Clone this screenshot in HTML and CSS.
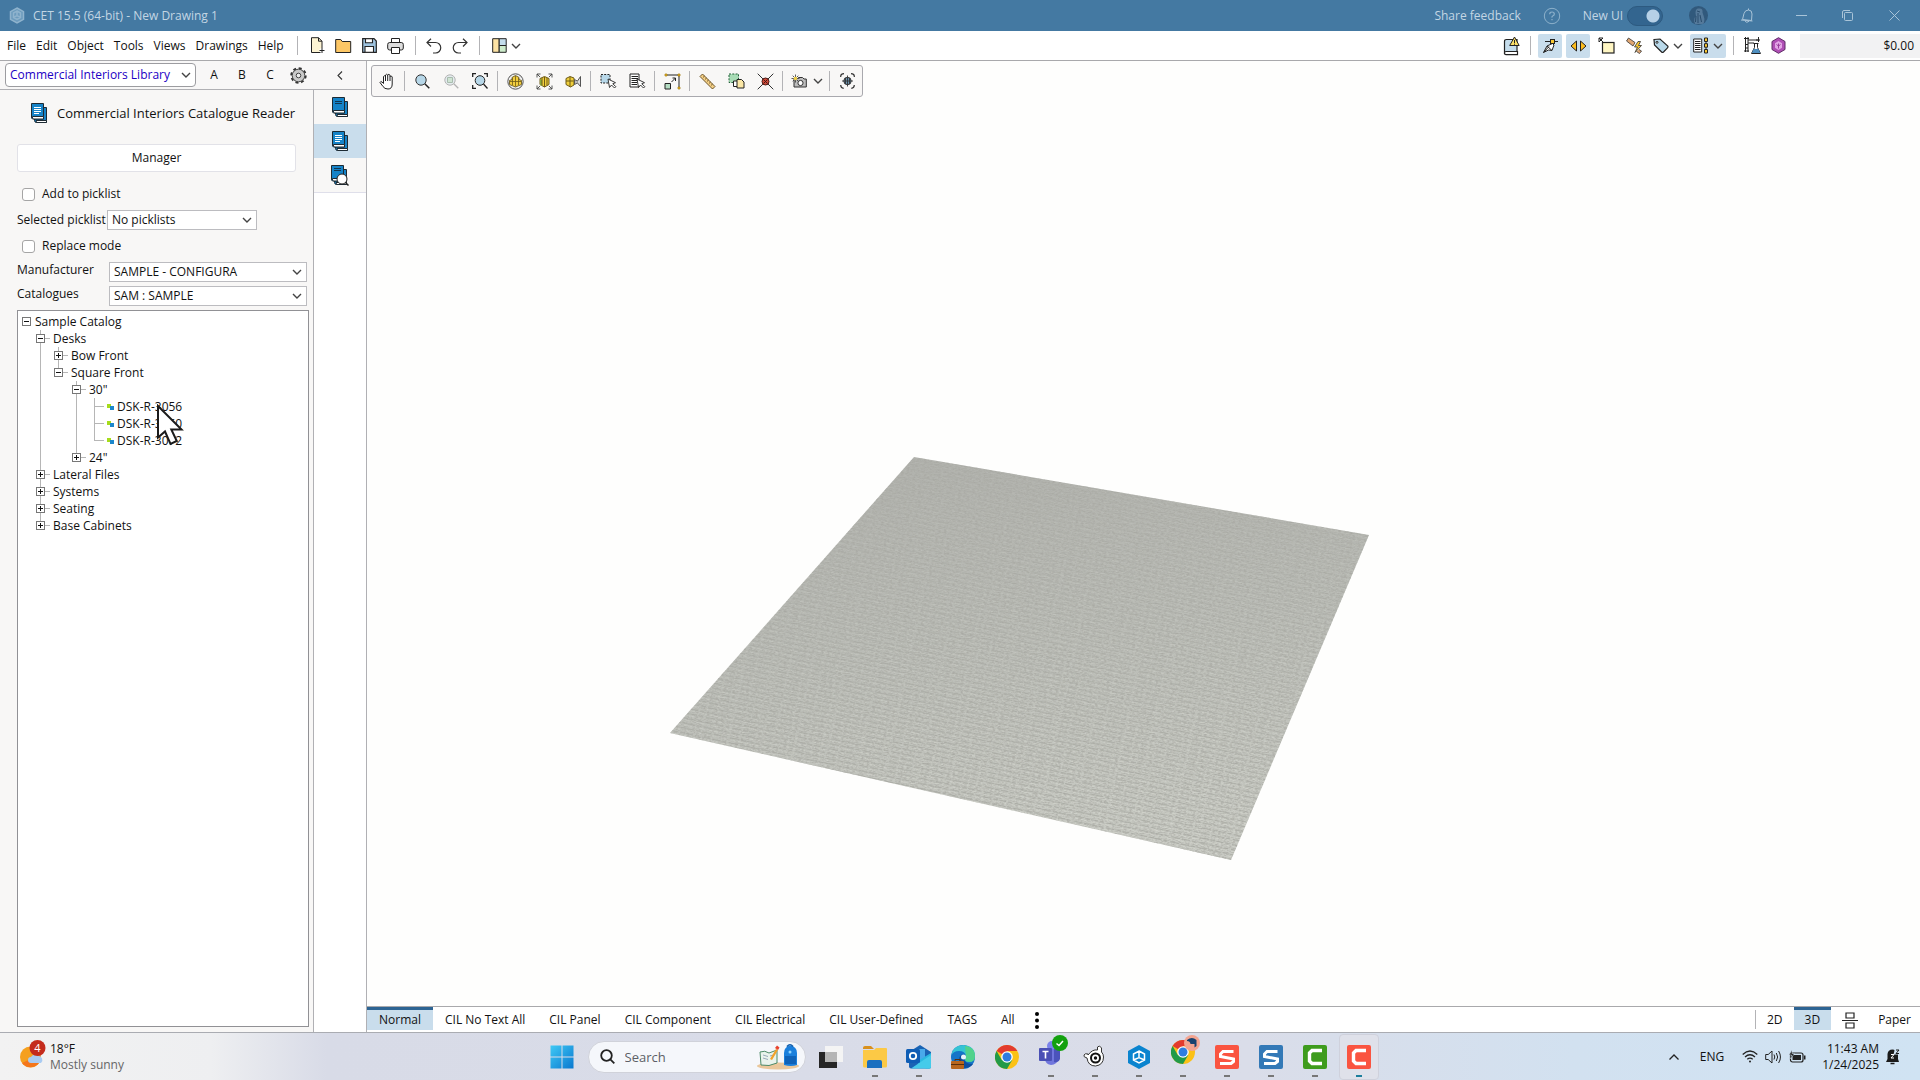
FILE: index.html
```html
<!DOCTYPE html>
<html lang="en">
<head>
<meta charset="utf-8">
<title>CET 15.5 (64-bit) - New Drawing 1</title>
<link rel="stylesheet" href="styles.css">
</head>
<body>
<svg class="defs" width="0" height="0" aria-hidden="true">
  <symbol id="chev" viewBox="0 0 10 10"><path d="M1 3l4 4 4-4" fill="none" stroke="#444" stroke-width="1.4"/></symbol>
  <symbol id="book" viewBox="0 0 16 21"><path d="M3.500 4.500h12v15h-10.500q-1.500-.5-1.500-2z" fill="#1583c8" stroke="#1d2a33"/><path d="M5 17.500h10.500v2H5.500z" fill="#fff" stroke="#1d2a33"/><path d="M.5.500h12v15.500H1.500q-1-.5-1-2z" fill="#1583c8" stroke="#1d2a33"/><path d="M1.500 13.500h11v2.500h-10q-1.500-.8-1-2.500z" fill="#fff" stroke="#1d2a33"/></symbol>
  <symbol id="chrome" viewBox="0 0 24 24"><circle cx="12" cy="12" r="12" fill="#fbc116"/><path d="M12 12L1.600 6A12 12 0 0 1 22.400 6H12z" fill="#e33b2e"/><path d="M1.600 6A12 12 0 0 0 12 24l5.200-9L12 12 6.800 15z" fill="#229a48"/><circle cx="12" cy="12" r="5.800" fill="#fff"/><circle cx="12" cy="12" r="4.500" fill="#2f7de0"/></symbol>
</svg>

<header class="titlebar">
  <svg class="logo" width="16" height="17" viewBox="0 0 16 17" fill="none" stroke="#8fb3cd" stroke-width="1.500"><path d="M8 1l6.500 3.700v7.600L8 16l-6.500-3.700V4.700z" fill="#6c9bbd"/><path d="M8 4l3.500 2v4.500L8 12.500l-3.500-2V6zM8 4v4.500M4.500 10.500L8 8.500l3.500 2"/></svg>
  <h1>CET 15.5 (64-bit) - New Drawing 1</h1>
  <a class="feedback" href="#">Share feedback</a>
  <button class="tb help" aria-label="Help"><svg width="18" height="18" viewBox="0 0 18 18" fill="none" stroke="#8db1cb"><circle cx="9" cy="9" r="7.700"/><path d="M6.700 7.200q0-2.200 2.300-2.200t2.300 2q0 1.200-1.300 1.800t-1 1.800M9 12v1.300" stroke-width="1.200"/></svg></button>
  <label class="newui">New UI <input type="checkbox" checked></label>
  <button class="tb avatar" aria-label="Account"><svg width="19" height="19" viewBox="0 0 19 19"><circle cx="9.500" cy="9.500" r="9.500" fill="#31597c"/><path d="M6 18q-1.500-3-.5-6l1.500-2-.5-3q0-5 3.500-4.500 4-.5 3.500 4l1 3q1.500 3 .5 7-1 2-2 1.500" fill="#54799a"/><path d="M9 7v10M11 9l1.500 7M7 10l-.5 6M8 5l3 1" stroke="#294c6c" fill="none"/></svg></button>
  <button class="tb bell" aria-label="Notifications"><svg width="14" height="16" viewBox="0 0 14 16" fill="none" stroke="#a9c4d8"><path d="M2.500 11.500L4 5.500q1-3.500 4.500-3.500T12 6l-.5 6.500zM1 12l11.500 1M5 13q1.500 2.500 4 .3M8.500 2V.5"/></svg></button>
  <button class="tb min" aria-label="Minimize"><svg width="11" height="11" viewBox="0 0 11 11"><path d="M0 5.500h11" stroke="#a9c4d8"/></svg></button>
  <button class="tb max" aria-label="Restore"><svg width="11" height="11" viewBox="0 0 11 11" fill="none" stroke="#a9c4d8"><rect x="2.500" y="2.500" width="8" height="8" rx="1"/><path d="M.5 8V2q0-1.500 1.500-1.500h6"/></svg></button>
  <button class="tb close" aria-label="Close"><svg width="11" height="11" viewBox="0 0 11 11"><path d="M.5.500l10 10M10.500.500l-10 10" stroke="#a9c4d8"/></svg></button>
</header>

<div class="menubar">
  <nav class="menus">
    <button>File</button><button>Edit</button><button>Object</button><button>Tools</button><button>Views</button><button>Drawings</button><button>Help</button>
  </nav>
  <i class="sep"></i>
  <div class="quick">
    <button aria-label="New"><svg width="16" height="17" viewBox="0 0 16 17"><path d="M1.500.7h7l3.500 3.500v11.300h-10.500z" fill="#fdf4d3" stroke="#222"/><path d="M8.500.7v3.500H12" fill="none" stroke="#222"/><path d="M12 11v5M9.500 13.500h5" stroke="#fff" stroke-width="3"/><path d="M12 11v5M9.500 13.500h5" stroke="#222"/></svg></button>
    <button aria-label="Open"><svg width="17" height="16" viewBox="0 0 17 16"><path d="M.7 14.500v-13h5l1.500 2h8.500v11z" fill="#fdc765" stroke="#222"/></svg></button>
    <button aria-label="Save"><svg width="15" height="15" viewBox="0 0 15 15"><path d="M.7.700h11.300l2.300 2.300v11.300H.7z" fill="#9ec3df" stroke="#222" stroke-width="1.200"/><path d="M3.500.700h7v4h-7zM3 8.500h8.500v5.800H3z" fill="#fff" stroke="#222" stroke-width="1.100"/></svg></button>
    <button aria-label="Print"><svg width="17" height="16" viewBox="0 0 17 16" stroke="#222"><path d="M4.500 5V.500h8V5" fill="#fff"/><rect x=".7" y="4.500" width="15.600" height="7.500" rx="2" fill="#ddd"/><path d="M4.500 9.500h8v6h-8z" fill="#fff"/></svg></button>
  </div>
  <i class="sep"></i>
  <div class="quick undo">
    <button aria-label="Undo"><svg width="16" height="16" viewBox="0 0 16 16" fill="none" stroke="#333" stroke-width="1.200"><path d="M5 .7L1 4.500l4 4M1 4.500h8.500a5 5 0 0 1 0 10.500H7"/></svg></button>
    <button aria-label="Redo"><svg width="16" height="16" viewBox="0 0 16 16" fill="none" stroke="#333" stroke-width="1.200"><path d="M11 .7l4 3.800-4 4M15 4.500H6.500a5 5 0 0 0 0 10.500H9"/></svg></button>
  </div>
  <i class="sep"></i>
  <button class="drop layout" aria-label="Layout"><svg width="15" height="15" viewBox="0 0 15 15" stroke="#222"><path d="M.7.700h6.500v13.600H.7z" fill="#fde3a4"/><path d="M7.200.700h7v6.800h-7z" fill="#c3ddec"/><path d="M7.200 7.500h7v6.800h-7z" fill="#cdeccb"/></svg><svg width="10" height="10"><use href="#chev"/></svg></button>

  <div class="tools-right">
    <button aria-label="Library warnings"><svg width="17" height="20" viewBox="0 0 17 20"><path d="M1.500 18V5.500q0-2 2-2H14v12.500" fill="#c5ddec" stroke="#222" stroke-width="1.200"/><path d="M14.500 15.500H3q-1.500 0-1.500 1.600t1.500 1.600h11.500z" fill="#fff" stroke="#222" stroke-width="1.200"/><path d="M11.500 1l4.700 8.500h-9.500z" fill="#fce068" stroke="#222"/><path d="M11.500 4v3M11.500 7.700v1" stroke="#222"/></svg></button>
    <i class="sep"></i>
    <button class="on" aria-label="Snap"><svg width="17" height="16" viewBox="0 0 17 16" stroke="#222"><path d="M3 3.500h13"/><path d="M1.500 14.500L5 8l5.500-2.500L12 7l-2 5.500-3.500-.5z" fill="#fff"/><path d="M1.500 14.500l5.500-6M5 8l5 4.500" fill="none"/><rect x="8.500" y="1.500" width="4" height="4" fill="#f8c62f"/></svg></button>
    <button class="on" aria-label="Stretch"><svg width="17" height="12" viewBox="0 0 17 12" stroke="#222"><path d="M6.500 1v10L1 6zM10.500 1v10L16 6z" fill="#fdbd1e"/></svg></button>
    <button aria-label="Note"><svg width="17" height="17" viewBox="0 0 17 17" stroke="#222"><rect x="4.500" y="5.500" width="11.500" height="10.500" fill="#fff6c3" stroke-width="1.200"/><path d="M1 1l5 5M1 5V1h4z" fill="#fff"/></svg></button>
    <button aria-label="Quick connect"><svg width="17" height="17" viewBox="0 0 17 17" stroke="#333" stroke-width=".8"><path d="M2.500 1L9 5.500l-2 3.500-6.500-5zM13 12.500l2.500 1.500-2 2.500-3-2" fill="#e0a672"/><path d="M12 4.500L8.500 10h3L9 15.500l6.500-7h-3l2-4z" fill="#fbc832"/></svg></button>
    <button class="drop" aria-label="Tags"><svg width="16" height="16" viewBox="0 0 16 16" stroke="#222"><path d="M1 1.500l6-.500L14.800 8q.5 1-.3 1.800l-4 4.200q-1 .8-1.900 0L1.500 7z" fill="#b9d9ea" stroke-width="1.200"/><circle cx="4" cy="4.300" r="1" fill="#fff"/></svg><svg width="10" height="10"><use href="#chev"/></svg></button>
    <button class="on drop" aria-label="List"><svg width="16" height="17" viewBox="0 0 16 17" stroke="#222"><path d="M.7 2h8v13h-8z" fill="#fff"/><path d="M2 4.500h5.500M2 6.500h5.500M2 8.500h5.500M2 10.500h5.500M2 12.500h5.500M13 2v13"/><path d="M11.500 1h3v3.500h-3zM11.500 6.700h3v3.500h-3zM11.500 12.500h3V16h-3z" fill="#fbc832"/></svg><svg width="10" height="10"><use href="#chev"/></svg></button>
    <i class="sep"></i>
    <button class="slim" aria-label="Lab"><svg width="17" height="17" viewBox="0 0 17 17" fill="none" stroke="#222"><path d="M1.500 0v15M4 0v15M0 1.500h5M0 14h5M4 3h10M4 6h6M14.500 0v5M12 3h4M1.500 7.500H4M1.500 11H4"/><path d="M9.500 6.500h5M10.500 6.500v4l-3 6h9l-3-6v-4" fill="#fff"/><path d="M9.500 12h5l1.800 4H7.800z" fill="#4f8fc0" stroke="none"/></svg></button>
    <button class="slim" aria-label="Marketplace"><svg width="15" height="17" viewBox="0 0 15 17"><path d="M7.500.700l6.500 3.800v8l-6.500 3.800L1 12.500v-8z" fill="#b04fb5" stroke="#5e2a66"/><path d="M7.500 4l3.500 2.200v4.600L7.500 13 4 10.800V6.200z" fill="#e3a6e6"/><path d="M7.500 6.500v5M5.500 7.500l2 1.500 2-1.500" stroke="#9a3d9f" fill="none"/></svg></button>
    <output class="price">$0.00</output>
  </div>
</div>

<main class="work">
  <aside class="side">
    <div class="lib">
      <select class="libsel" aria-label="Library"><option>Commercial Interiors Library</option></select>
      <button>A</button><button>B</button><button>C</button>
      <button class="gear" aria-label="Settings"><svg width="17" height="17" viewBox="0 0 17 17"><circle cx="8.500" cy="8.500" r="7.200" fill="none" stroke="#333" stroke-width="2" stroke-dasharray="3 2.650"/><circle cx="8.500" cy="8.500" r="6.300" fill="#c9c9c9" stroke="#444"/><circle cx="8.500" cy="8.500" r="2.300" fill="#eee" stroke="#444"/></svg></button>
      <button class="collapse" aria-label="Collapse"><svg width="6" height="9" viewBox="0 0 6 9"><path d="M5 .5l-4 4 4 4" fill="none" stroke="#333" stroke-width="1.100"/></svg></button>
    </div>
    <div class="sidebody">
      <section class="panel">
        <h2><svg width="16" height="21"><use href="#book"/><path d="M3 4.500h7M3 6.500h7M3 8.500h7M3 10.500h5" stroke="#fff"/></svg>Commercial Interiors Catalogue Reader</h2>
        <button class="manager">Manager</button>
        <label class="check"><input type="checkbox">Add to picklist</label>
        <div class="field pick"><label for="pl">Selected picklist</label><select id="pl"><option>No picklists</option></select></div>
        <label class="check"><input type="checkbox">Replace mode</label>
        <div class="field wide"><label for="mf">Manufacturer</label><select id="mf"><option>SAMPLE - CONFIGURA</option></select></div>
        <div class="field wide"><label for="ct">Catalogues</label><select id="ct"><option>SAM : SAMPLE</option></select></div>
        <div class="treebox">
          <ul class="tree">
            <li><div class="node"><button class="tw open" aria-label="Collapse"></button>Sample Catalog</div>
              <ul>
                <li><div class="node"><button class="tw open" aria-label="Collapse"></button>Desks</div>
                  <ul>
                    <li><div class="node"><button class="tw" aria-label="Expand"></button>Bow Front</div></li>
                    <li><div class="node"><button class="tw open" aria-label="Collapse"></button>Square Front</div>
                      <ul>
                        <li><div class="node"><button class="tw open" aria-label="Collapse"></button>30"</div>
                          <ul>
                            <li><div class="node leaf"><i></i>DSK-R-3056</div></li>
                            <li><div class="node leaf"><i></i>DSK-R-3060</div></li>
                            <li><div class="node leaf"><i></i>DSK-R-3072</div></li>
                          </ul></li>
                        <li><div class="node"><button class="tw" aria-label="Expand"></button>24"</div></li>
                      </ul></li>
                  </ul></li>
                <li><div class="node"><button class="tw" aria-label="Expand"></button>Lateral Files</div></li>
                <li><div class="node"><button class="tw" aria-label="Expand"></button>Systems</div></li>
                <li><div class="node"><button class="tw" aria-label="Expand"></button>Seating</div></li>
                <li><div class="node"><button class="tw" aria-label="Expand"></button>Base Cabinets</div></li>
              </ul></li>
          </ul>
        </div>
      </section>
      <nav class="strip">
        <button aria-label="Catalogues"><svg width="16" height="21"><use href="#book"/><path d="M3 4.500h7M3 6.500h7" stroke="#12364f"/></svg></button>
        <button class="on" aria-label="Catalogue reader"><svg width="16" height="21"><use href="#book"/><path d="M3 4.500h7M3 6.500h7M3 8.500h7M3 10.500h5" stroke="#fff"/></svg></button>
        <button aria-label="Catalogue search"><svg width="18" height="21"><use href="#book" width="16" height="21"/><path d="M3 3.500h7M3 5.500h7" stroke="#12364f"/><circle cx="11" cy="14" r="5" fill="#fff" stroke="#222"/><path d="M14.500 17.500l3 3" stroke="#222" stroke-width="1.500"/></svg></button>
      </nav>
    </div>
  </aside>

  <div class="right">
    <div class="canvas">
      <svg class="scene" viewBox="0 0 1553 945" preserveAspectRatio="xMidYMid meet" aria-label="3D view">
        <defs>
          <linearGradient id="cg" x1="0" y1="0" x2="0.150" y2="1"><stop offset="0" stop-color="#b0b1ac"/><stop offset=".5" stop-color="#babcb6"/><stop offset="1" stop-color="#c8cac3"/></linearGradient>
          <pattern id="weave" width="160" height="5" patternUnits="userSpaceOnUse" patternTransform="rotate(12)"><path d="M0 1.500h160" stroke="#85877f" stroke-dasharray="7 2 4 3 9 2 5 1"/><path d="M0 3.500h160" stroke="#e2e4dc" stroke-dasharray="5 3 8 2 4 2"/></pattern>
          <linearGradient id="fade" x1="0" y1="0" x2="0" y2="1"><stop offset="0" stop-color="#fff" stop-opacity=".05"/><stop offset="1" stop-color="#fff" stop-opacity=".4"/></linearGradient>
          <mask id="m"><rect x="300" y="390" width="710" height="415" fill="url(#fade)"/></mask>
          <filter id="grain" x="0" y="0" width="1" height="1"><feTurbulence type="fractalNoise" baseFrequency=".35 .8" numOctaves="2" seed="4"/><feColorMatrix values="0 0 0 0 .38  0 0 0 0 .38  0 0 0 0 .35  1.600 0 0 0 -.620"/><feComposite in2="SourceGraphic" operator="in"/></filter>
        </defs>
        <path d="M547 396l455 78-138 325-561-127z" fill="url(#cg)"/>
        <path d="M547 396l455 78-138 325-561-127z" fill="url(#weave)" mask="url(#m)"/>
        <path d="M547 396l455 78-138 325-561-127z" filter="url(#grain)"/>
      </svg>
      <div class="viewbar">
        <div><button aria-label="Pan"><svg width="17" height="17" viewBox="0 0 17 17"><path d="M4.500 10.500V3.500q1-1.500 2 0V2q1-1.500 2.200 0v0q1.200-1.500 2.300.3v1q1.500-1 2.200.7V11q0 5-4.200 5-3.500 0-5-2.500L1 9.500q.5-1.500 2-.5z" fill="#fff" stroke="#222"/><path d="M6.500 3v5M8.700 2v6M11 3v5" stroke="#222"/></svg></button></div>
        <i class="sep"></i>
        <div><button aria-label="Zoom"><svg width="15" height="15" viewBox="0 0 15 15"><circle cx="6" cy="6" r="5.200" fill="#b7d7e8" stroke="#333"/><path d="M9.800 9.800l4.500 4.500" stroke="#222" stroke-width="1.500"/></svg></button><button aria-label="Zoom selection" disabled><svg width="15" height="15" viewBox="0 0 15 15"><circle cx="6" cy="6" r="5.200" fill="#e4ebee" stroke="#b4b4b4"/><path d="M9.800 9.800l4.500 4.500" stroke="#b4b4b4" stroke-width="1.300"/><path d="M3.500 3.500h5v5h-5z" fill="#d0e4d4" stroke="#a9bcae"/></svg></button><button aria-label="Zoom extents"><svg width="16" height="16" viewBox="0 0 16 16" fill="none" stroke="#222"><circle cx="8" cy="7.500" r="4.800" fill="#b7d7e8"/><path d="M11.500 11l4 4.500M.7 4V.700H4M12 .700h3.300V4M.7 12v3.300H4" stroke-width="1.300"/></svg></button></div>
        <i class="sep"></i>
        <div><button aria-label="Orbit"><svg width="17" height="17" viewBox="0 0 17 17"><circle cx="8.500" cy="8.500" r="7.700" fill="#eee" stroke="#555"/><path d="M5 4.500l3.500-2 3.500 2v2l2.500 1v4L8.500 14l-6-2.500v-4l2.500-1z" fill="#f3ce3d" stroke="#5b4a10" stroke-width=".8"/><path d="M8.500 3v10.500M3 8.500h11M5.500 5v7M11.500 5v7" stroke="#6d5a17" stroke-width=".8"/></svg></button><button aria-label="Fit all"><svg width="17" height="17" viewBox="0 0 17 17" fill="none"><path d="M4 5.500l4.500-2 4.500 2v6L8.500 14 4 11.500z" fill="#f0cf3c" stroke="#6d5a17"/><path d="M4 6v6l2 1V7z" fill="#86a840"/><path d="M8.500 4v10M6 5v7M11 5v7" stroke="#6d5a17"/><path d="M1 4.500V1h3.500M12.500 1H16v3.500M1 12.500V16h3.500M12.500 16H16v-3.500M1 1l3 3M16 1l-3 3M1 16l3-3M16 16l-3-3" stroke="#444" stroke-width=".9"/></svg></button><button aria-label="Walk"><svg width="17" height="15" viewBox="0 0 17 15"><path d="M1 4.500l4-2 4 1.500v7L5.500 13 1 10.500z" fill="#f0cf3c" stroke="#6d5a17"/><path d="M5 3v10M1 7h7.500" stroke="#6d5a17"/><path d="M9.500 5.500l3 1.500v2l-3 1.500z" fill="#bbb" stroke="#444" stroke-width=".8"/><path d="M12.500 7l3-4.500v10l-3-3.500" fill="#ddd" stroke="#444" stroke-width=".9"/></svg></button></div>
        <i class="sep"></i>
        <div><button aria-label="Select area"><svg width="17" height="16" viewBox="0 0 17 16"><path d="M1 1.500h9v8.500H1z" fill="#b7d7e8" stroke="#222" stroke-dasharray="2 1.200"/><path d="M8 6l1.500 8.500 2-2.500 3 3 1.300-1.300-3-3 2.700-1z" fill="#fff" stroke="#222" stroke-width=".9"/></svg></button><button aria-label="Select list"><svg width="17" height="17" viewBox="0 0 17 17"><path d="M1 1h9v13H1z" fill="#fff" stroke="#222"/><path d="M2.500 3.500H9M2.500 5.500H9M2.500 7.500H9M2.500 9.500H8M2.500 11.500H8" stroke="#222"/><path d="M8 6l1.500 8.500 2-2.500 3 3 1.300-1.300-3-3 2.700-1z" fill="#fff" stroke="#222" stroke-width=".9"/></svg></button></div>
        <i class="sep"></i>
        <div><button aria-label="Scale"><svg width="17" height="17" viewBox="0 0 17 17" stroke="#222"><path d="M2 2h13v13" fill="none"/><path d="M1 10.500h5.500V16H1z" fill="#b5ddc3"/><path d="M7.500 9l4-4M8.500 5h3v3" fill="none"/><path d="M1 1h2v2H1zM14 1h2v2h-2zM14 14h2v2h-2z" fill="#fbc832" stroke="#a0760a" stroke-width=".7"/></svg></button></div>
        <i class="sep"></i>
        <div><button aria-label="Measure"><svg width="17" height="17" viewBox="0 0 17 17"><path d="M1 3.500L3.500 1 16 13.500 13.500 16z" fill="#f3cf86" stroke="#5e4519" stroke-width=".9"/><path d="M5.500 3l-1.300 1.300M7.500 5L6.200 6.300M9.500 7L8.200 8.300M11.500 9l-1.300 1.300M13.500 11l-1.300 1.300" stroke="#5e4519"/></svg></button><button aria-label="Copy"><svg width="17" height="16" viewBox="0 0 17 16"><path d="M1 1h9.500v8.500H1z" fill="#a8dcb6" stroke="#24613a" stroke-dasharray="2 1.300"/><path d="M5.500 8h4l2 2v3.500h-6z" fill="#fff" stroke="#222"/><path d="M9 6.500h4.500l2.500 2.500v6H9z" fill="#fbe7a6" stroke="#222"/></svg></button><button aria-label="Delete"><svg width="17" height="17" viewBox="0 0 17 17"><path d="M.7.700l15.600 15.600M16.300.700L.7 16.300" stroke="#333"/><circle cx="8.500" cy="8.500" r="3.500" fill="#cf4a39" stroke="#4a1a15"/><path d="M6.500 6.500l4 4M10.500 6.500l-4 4" stroke="#4a1a15"/></svg></button></div>
        <i class="sep"></i>
        <div><button class="drop cam" aria-label="Camera"><svg width="16" height="14" viewBox="0 0 16 14"><path d="M3 5h3l1.500-1.500h4L13 5h2.300v8H3z" fill="#bdbdbd" stroke="#333"/><circle cx="9.500" cy="9" r="2.600" fill="#fff" stroke="#333"/><path d="M4.500.5v8M.5 4.500h8M1.700 1.700l5.600 5.600M7.300 1.700L1.700 7.300" stroke="#333" stroke-width=".8"/><circle cx="4.500" cy="4.500" r="1.800" fill="#f1d14a"/></svg><svg width="10" height="10"><use href="#chev"/></svg></button></div>
        <i class="sep"></i>
        <div><button aria-label="Focus"><svg width="15" height="16" viewBox="0 0 15 16" fill="none" stroke="#333"><path d="M.7 4V3Q1 .7 4 .7M11 .7q3 0 3.300 2.300v1M.7 12q0 3 3 3.300M14.300 12q0 3-3 3.300" stroke-width="1.200"/><circle cx="7.500" cy="8" r="3.700" fill="#6c95b3"/><path d="M7.500 2.500v11M2 8h11M5.500 5v6M9.500 5v6" stroke-width=".9"/></svg></button></div>
      </div>
    </div>
    <div class="status">
      <nav class="views">
        <button class="on">Normal</button><button>CIL No Text All</button><button>CIL Panel</button><button>CIL Component</button><button>CIL Electrical</button><button>CIL User-Defined</button><button>TAGS</button><button>All</button>
        <button class="more" aria-label="More"><svg width="4" height="17" viewBox="0 0 4 17"><circle cx="2" cy="2" r="2"/><circle cx="2" cy="8.500" r="2"/><circle cx="2" cy="15" r="2"/></svg></button>
      </nav>
      <nav class="modes">
        <i class="sep"></i><button>2D</button><button class="on">3D</button><button class="split" aria-label="Split"><svg width="16" height="17" viewBox="0 0 16 17" fill="none" stroke="#222" stroke-width="1.200"><path d="M4 1h8v5H4zM0 8.500h16M4 11h8v5H4z"/></svg></button><button>Paper</button>
      </nav>
    </div>
  </div>
</main>

<footer class="taskbar">
  <button class="weather"><svg width="26" height="28" viewBox="0 0 26 28"><circle cx="10.500" cy="17" r="10.500" fill="#f5a01f"/><path d="M2 23a10.500 10.500 0 0 0 17 0l-4-6z" fill="#f4761c"/><path d="M11 23a3 3 0 0 1 0-6 4.500 4.500 0 0 1 7-1 4 4 0 0 1 3 7z" fill="#a9cbf2"/><circle cx="17.500" cy="8" r="8" fill="#c42b1c"/><text x="17.500" y="12" text-anchor="middle" font-size="11" fill="#fff">4</text></svg><span>18°F<small>Mostly sunny</small></span></button>
  <div class="apps">
    <button class="app" aria-label="Start"><svg width="24" height="24" viewBox="0 0 24 24"><defs><linearGradient id="wg" x1="0" y1="0" x2="1" y2="1"><stop offset="0" stop-color="#3fc9f5"/><stop offset="1" stop-color="#0a78cf"/></linearGradient></defs><path d="M.5.500h11v11H.5zM12.500.500h11v11h-11zM.5 12.500h11v11H.5zM12.500 12.500h11v11h-11z" fill="url(#wg)"/></svg></button>
    <label class="search"><svg width="15" height="15" viewBox="0 0 15 15" fill="none" stroke="#222" stroke-width="1.800"><circle cx="6.500" cy="6.500" r="5.300"/><path d="M10.300 10.300l4 4"/></svg><input type="text" placeholder="Search" aria-label="Search"><svg width="44" height="26" viewBox="0 0 44 26"><ellipse cx="22" cy="22" rx="21" ry="3.500" fill="#eac79b"/><path d="M4 8q5-2 9 1l8-3v13l-8 2.500L5 21z" fill="#e9f3ec" stroke="#4d8a68"/><path d="M7 11l5 1.500M7 14l5 1.500M14 12l5-1.500" stroke="#9ab"/><path d="M14 15l6-10 2 1-6 10z" fill="#f2a22a"/><path d="M19 4l2-2.500 2.500 2-1.500 2.500z" fill="#e8432f"/><path d="M28 21V9q0-6 6-7.500 7 1 7 7.500v12q-6 2-13 0z" fill="#1a7fdc"/><path d="M31 2.500q3-3.500 6 0" stroke="#0d5baa" fill="none" stroke-width="1.500"/><path d="M29 12h11v8H29z" fill="#0f62b8"/><circle cx="34" cy="8" r="1.500" fill="#8fd4ff"/></svg></label>
    <button class="app" aria-label="Task view"><svg width="24" height="22" viewBox="0 0 24 22"><path d="M6 0h18v16H6z" fill="#f4f4f4"/><path d="M0 6h18v16H0z" fill="#262626"/><path d="M6 6h12v10H6z" fill="#b5b5b5"/></svg></button>
    <button class="app run" aria-label="File Explorer"><svg width="24" height="22" viewBox="0 0 24 22"><path d="M0 2q0-2 2-2h6l3 3h-11z" fill="#d9901b"/><path d="M0 4h11l2-2h10q1 0 1 1v17q0 1.500-1.500 1.500h-21Q0 21.500 0 20z" fill="#fcc945"/><path d="M4 16q0-2 2-2h11q2 0 2 2v6H4z" fill="#1a6fc0"/></svg></button>
    <button class="app run" aria-label="Outlook"><svg width="25" height="24" viewBox="0 0 25 24"><path d="M3 7L14 0l11 7v15q0 1.500-2 1.500H5q-2 0-2-2z" fill="#1a63b4"/><path d="M9 4h10v12H9z" fill="#49a9ea"/><path d="M25 8L10 17l10 6.500h3q2 0 2-2z" fill="#2bb8e0"/><path d="M5 23.500L25 10v12q0 1.500-2 1.500z" fill="#45cbea"/><rect x="0" y="4" width="14" height="14" rx="1.500" fill="#0f5db5"/><circle cx="7" cy="11" r="3.200" fill="none" stroke="#fff" stroke-width="1.800"/></svg></button>
    <button class="app" aria-label="Edge"><svg width="24" height="24" viewBox="0 0 24 24"><circle cx="12" cy="12" r="12" fill="#1575c8"/><path d="M0 11Q2 0 12.500 0 24 1 24 11q0 6-6 6-4 0-4-3 1-1 1-3-1-5-7-5Q2 6 0 11z" fill="#36c3d4"/><path d="M14 1q10 1 10 10 0 6-6 6-4 0-4-3l1-2z" fill="#5cd96e" opacity=".7"/><path d="M8 15q0-6 6-6-2 2-1 5 1 5 9 5-3 4-8 4-6-1-6-8z" fill="#0d4fa0"/><circle cx="12.500" cy="12" r="2.500" fill="#e8f4fb"/><rect x="0" y="16" width="13" height="8" rx="1" fill="#b8661d"/><path d="M4 16v-1.500h5V16M0 19.500h13" stroke="#5c2f0a" fill="none"/></svg></button>
    <button class="app" aria-label="Chrome"><svg width="24" height="24"><use href="#chrome"/></svg></button>
    <button class="app run" aria-label="Teams"><svg class="badged" width="34" height="34" viewBox="0 0 34 34"><circle cx="18" cy="11" r="5" fill="#7b83eb"/><path d="M11 14h14v9q-2 7-8 7-6-1-7-8z" fill="#7076dd"/><path d="M20 14h6v10q-2 4-6 3z" fill="#4b53bc"/><rect x="5" y="13" width="13" height="13" rx="1" fill="#4a50b5"/><path d="M8.500 16.500h6M11.500 16.500v7" stroke="#fff" stroke-width="1.600"/><circle cx="26" cy="8" r="8" fill="#13a10e"/><path d="M22.500 8.500l2.500 2 4-4.500" stroke="#fff" stroke-width="1.500" fill="none"/></svg></button>
    <button class="app run" aria-label="SteelSeries"><svg width="24" height="24" viewBox="0 0 24 24"><path d="M5 9Q2 8 1 10t3 3q1 8 8.500 8 8-1 8-9 0-3-2-5 1-5-2-6-3 0-2 4-5-1-9.500 5z" fill="#fff" stroke="#333"/><circle cx="12.500" cy="13" r="4.500" fill="#fff" stroke="#111" stroke-width="2"/><circle cx="12.500" cy="13" r="1.700" fill="#111"/></svg></button>
    <button class="app run" aria-label="CET"><svg width="22" height="24" viewBox="0 0 22 24"><path d="M11 0l11 6v12l-11 6L0 18V6z" fill="#0a84cf"/><path d="M11 6l5.500 3v6L11 18l-5.500-3V9zM11 6v6.500M5.500 15L11 12.500l5.500 2.500" fill="none" stroke="#fff" stroke-width="1.500"/></svg></button>
    <button class="app run" aria-label="Chrome profile"><svg class="badged" width="34" height="34" viewBox="0 0 34 34"><use href="#chrome" x="5" y="5" width="24" height="24"/><circle cx="26" cy="8" r="8" fill="#f3a490"/><path d="M21 5q5-4 9.500 0v6l-2 1.500V9h-4q-.5-3-3.500-3z" fill="#17426f"/></svg></button>
    <button class="app run" aria-label="Snagit"><svg width="24" height="24" viewBox="0 0 24 24"><rect width="24" height="24" rx="2" fill="#fa5440"/><path d="M18.500 6.500H8L5.500 9v2.500l13 2.500v2.500L16 18.500H5" fill="none" stroke="#fff" stroke-width="3"/></svg></button>
    <button class="app run" aria-label="Snagit Editor"><svg width="24" height="24" viewBox="0 0 24 24"><rect width="24" height="24" rx="2" fill="#3379b7"/><path d="M18.500 6.500H8L5.500 9v2.500l13 2.500v2.500L16 18.500H5" fill="none" stroke="#fff" stroke-width="3"/></svg></button>
    <button class="app run" aria-label="Camtasia"><svg width="24" height="24" viewBox="0 0 24 24"><rect width="24" height="24" rx="2" fill="#3e9c1d"/><path d="M19 5.500H9L6.500 8v8L9 18.500h10" fill="none" stroke="#fff" stroke-width="3.400"/></svg></button>
    <button class="app run active" aria-label="Camtasia Recorder"><svg width="24" height="24" viewBox="0 0 24 24"><rect width="24" height="24" rx="2" fill="#fa5440"/><path d="M19 5.500H9L6.500 8v8L9 18.500h10" fill="none" stroke="#fff" stroke-width="3.400"/></svg></button>
  </div>
  <div class="tray">
    <button aria-label="Hidden icons"><svg width="10" height="6" viewBox="0 0 10 6"><path d="M.5 5.500L5 1l4.500 4.500" fill="none" stroke="#222" stroke-width="1.300"/></svg></button>
    <button class="lang">ENG</button>
    <button class="net" aria-label="Network, sound and battery"><svg width="16" height="13" viewBox="0 0 16 13" fill="none" stroke="#222" stroke-width="1.300"><path d="M.7 4.500Q8-2.500 15.300 4.500M3 7q5-4.500 10 0M5.300 9.300q2.700-2.300 5.400 0"/><circle cx="8" cy="11.500" r="1" fill="#222" stroke="none"/></svg><svg width="17" height="14" viewBox="0 0 17 14" fill="none" stroke="#222"><path d="M.7 4.500v5h2.500L7 13V1L3.200 4.500zM9 4.500q1.500 2.500 0 5M11.300 3q2.700 4 0 8M13.600 1q3.700 6 0 12"/></svg><svg width="17" height="14" viewBox="0 0 17 14"><rect x="1.500" y="3" width="12.500" height="9" rx="2" fill="none" stroke="#222" stroke-width="1.200"/><path d="M3.500 5H12v5H3.500zM15 5.500h1.500v4H15z" fill="#222"/><path d="M3 0L0 5h2.500L1.500 9l4-5.500H3z" fill="#222" stroke="#d2e2f0" stroke-width=".5"/></svg></button>
    <button class="clock">11:43 AM<br>1/24/2025</button>
    <button aria-label="Do not disturb"><svg width="14" height="16" viewBox="0 0 14 16"><path d="M0 13l1.500-3V5q.5-4.500 5-4.500 2 0 2 1l-1 4H12V10l1 3z" fill="#1a1a1a"/><path d="M4.500 14.500h4" stroke="#1a1a1a" stroke-width="1.500"/><path d="M10 1h3l-3 3.500h3" stroke="#1a1a1a" fill="none"/><path d="M5 5.500h3L5 9h3" stroke="#fff" fill="none"/></svg></button>
  </div>
</footer>

<svg class="cursor" width="28" height="42" viewBox="0 0 28 42" aria-hidden="true"><path d="M2 2v31.500l7-6 5.500 12.500 6.300-3-5.500-11.500h10.200z" fill="#fff" stroke="#1b1b1b" stroke-width="2"/></svg>
</body>
</html>
```
FILE: styles.css
```css
* { box-sizing: border-box; }
body {
  margin: 0;
  height: 100vh;
  display: flex;
  flex-direction: column;
  overflow: hidden;
  background: #fff;
  color: #111;
  font: 12px/16px "Segoe UI", "Open Sans", "Noto Sans", sans-serif;
}
button {
  display: flex;
  align-items: center;
  justify-content: center;
  padding: 0;
  border: 0;
  background: none;
  color: inherit;
  font: inherit;
  white-space: nowrap;
}
svg { flex: none; }
.defs { position: absolute; }
.sep { flex: none; width: 1px; background: #b3b3b6; }
.on { background: #c9ddec; }

/* title bar */
.titlebar {
  flex: none;
  display: flex;
  align-items: center;
  height: 31px;
  padding: 0 20px 0 9px;
  background: #4479a2;
  color: #c3d6e4;
}
.titlebar h1 { flex: 1; margin: 0 0 0 8px; font-size: 12px; font-weight: 400; }
.feedback { color: inherit; text-decoration: none; margin-right: 22px; }
.newui { display: flex; align-items: center; gap: 4px; margin: 0 26px 0 22px; }
.newui input {
  appearance: none;
  width: 36px;
  height: 20px;
  margin: 0;
  border: 1px solid #2d5a80;
  border-radius: 10px;
  background: radial-gradient(circle at 25px 9px, #b6d0e6 6px, transparent 7px) #33658f;
}
.bell { margin-left: 32px; }
.min { margin-left: 42px; }
.max { margin-left: 35px; }
.close { margin-left: 36px; }

/* menu bar */
.menubar {
  flex: none;
  display: flex;
  align-items: center;
  height: 30px;
  padding-left: 7px;
  border-bottom: 1px solid #a9a9ac;
}
.menubar .sep { height: 19px; }
.menus { display: flex; gap: 10px; width: 290px; }
.quick { display: flex; gap: 9px; margin: 0 11px; }
.quick button { width: 17px; }
.undo { margin: 0 11px 0 10px; }
.undo button { width: 16px; }
.undo { gap: 10px; }
.drop { gap: 4px; }
.layout { margin-left: 12px; }
.tools-right { flex: 1; display: flex; align-items: center; justify-content: flex-end; gap: 4px; }
.tools-right button { min-width: 24px; height: 24px; border-radius: 2px; }
.tools-right .slim { min-width: 22px; }
.tools-right .drop { width: 36px; }
.tools-right .sep { margin: 0 3px; }
.price {
  width: 120px;
  height: 24px;
  margin-left: 7px;
  padding: 4px 6px;
  background: #f2f2f3;
  text-align: right;
}

/* side panel */
.work { flex: 1; display: flex; min-height: 0; }
.side { flex: none; width: 367px; display: flex; flex-direction: column; border-right: 1px solid #b0b0b4; }
.lib {
  display: flex;
  align-items: center;
  height: 29px;
  padding-left: 5px;
  border-bottom: 1px solid #b0b0b4;
  background: #f8f7f7;
}
select {
  appearance: none;
  height: 20px;
  padding: 0 20px 0 4px;
  border: 1px solid #bcbcc0;
  border-radius: 0;
  background: #fff url("data:image/svg+xml,%3Csvg xmlns='http://www.w3.org/2000/svg' width='10' height='10'%3E%3Cpath d='M1 3l4 4 4-4' fill='none' stroke='%23444' stroke-width='1.400'/%3E%3C/svg%3E") no-repeat right 4px center;
  color: inherit;
  font: inherit;
}
.libsel { width: 191px; height: 24px; margin-right: 4px; border-color: #9c9ca0; border-radius: 4px; color: #1c00c4; }
.lib button { width: 28px; height: 24px; }
.lib .collapse { margin: 0 21px 0 auto; width: 10px; }
.sidebody { flex: 1; display: flex; min-height: 0; }
.panel {
  flex: 1;
  display: flex;
  flex-direction: column;
  min-width: 0;
  min-height: 0;
  padding: 11px 4px 5px 17px;
  border-right: 1px solid #b0b0b4;
  background: #f8f7f6;
}
.panel h2 { display: flex; align-items: center; gap: 10px; height: 24px; margin: 0 0 19px 14px; font-size: 13px; font-weight: 400; white-space: nowrap; }
.manager { flex: none; height: 28px; margin: 0 13px 10px 0; border: 1px solid #e2e2e8; border-radius: 3px; background: #fff; }
.check { display: flex; align-items: center; gap: 7px; height: 24px; padding-left: 5px; }
.check input { appearance: none; width: 13px; height: 13px; margin: 0; border: 1px solid #a5a5a5; border-radius: 3px; background: #fff; }
.field { display: flex; height: 20px; margin-bottom: 4px; }
.pick { gap: 6px; margin: 4px 0; align-items: center; }
.pick label { width: 84px; white-space: nowrap; }
.pick select { width: 150px; }
.wide { justify-content: space-between; padding-right: 2px; }
.wide select { width: 198px; }
.check + .wide { margin-top: 4px; }
.treebox { flex: 1; min-height: 0; padding: 2px 4px; border: 1px solid #919195; background: #fff; }
ul { list-style: none; margin: 0; padding: 0; }
.tree ul { padding-left: 18px; }
.tree > li > ul { padding-left: 14px; }
.node { display: flex; align-items: center; height: 17px; white-space: nowrap; }
.tree li li { background: linear-gradient(#b6b6b6, #b6b6b6) 4px 0 / 1px 100% no-repeat; }
.tree li li:last-child { background-size: 1px 8px; }
.tree li li .node { background: linear-gradient(#b6b6b6, #b6b6b6) 4px 8px / 10px 1px no-repeat; }
.tw {
  width: 9px;
  height: 9px;
  margin-right: 4px;
  border: 1px solid #777;
  background: linear-gradient(#111, #111) center / 5px 1px no-repeat, linear-gradient(#111, #111) center / 1px 5px no-repeat, #fff;
}
.tw.open { background: linear-gradient(#111, #111) center / 5px 1px no-repeat, #fff; }
.tree li li .tw { margin-right: 8px; }
.leaf i {
  width: 7px;
  height: 6px;
  margin: 0 3px 0 17px;
  background: linear-gradient(#1b87cc, #1b87cc) 3px 2px / 4px 4px no-repeat, linear-gradient(#a6dc1c, #a6dc1c) 0 0 / 4px 4px no-repeat;
}
.strip { flex: none; width: 52px; }
.strip button { width: 52px; height: 34px; background: #f8f7f6; }
.strip .on { background: #c9ddec; }
.strip button:last-child { height: 35px; border-bottom: 1px solid #dfdfea; }

/* drawing area */
.right { flex: 1; display: flex; flex-direction: column; min-width: 0; }
.canvas { flex: 1; display: grid; min-height: 0; background: #fefefd; }
.canvas > * { grid-area: 1 / 1; }
.scene { width: 100%; height: 100%; min-height: 0; }
.viewbar {
  justify-self: start;
  align-self: start;
  display: flex;
  align-items: center;
  height: 32px;
  margin: 4px;
  padding: 0 4px;
  border: 1px solid #a9a9ae;
  border-radius: 3px;
  background: #f8f7f6;
}
.viewbar > div { display: flex; gap: 7px; }
.viewbar button { width: 22px; height: 24px; }
.viewbar .cam { width: 34px; gap: 6px; justify-content: flex-end; }
.viewbar .sep { height: 20px; margin: 0 6px; }

/* drawing tabs */
.status { display: flex; justify-content: space-between; height: 26px; border-top: 1px solid #a9a9ac; }
.views, .modes { display: flex; }
.status button { padding: 0 12px; border-top: 3px solid transparent; border-bottom: 2px solid transparent; }
.status .on { border-top-color: #2d6493; background-clip: padding-box; }
.status .more { padding: 0 8px; }
.modes .sep { margin: 3px 0; }
.modes button { padding: 0 11px; }
.modes button:last-child { padding: 0 9px; }

/* taskbar */
.taskbar {
  flex: none;
  display: grid;
  grid-template-columns: 1fr auto 1fr;
  align-items: center;
  height: 48px;
  padding: 0 20px;
  border-top: 1px solid #aaacb2;
  background: linear-gradient(90deg, #f2f2f2 0, #eeeff1 11%, #d8dbe7 17%, #dadde9 65%, #d2e1f0 82%, #d0e3f3 100%);
}
.weather { justify-self: start; gap: 4px; text-align: left; }
.weather svg { margin-top: -6px; }
.weather small { display: block; font-size: 12px; color: #666; }
.apps { display: flex; align-items: center; }
.app {
  width: 44px;
  height: 46px;
  background: none;
}
.badged { margin-top: -10px; }
.run { background: linear-gradient(#777, #777) center 41px / 6px 2px no-repeat; }
.active { width: 40px; margin: 0 2px; border: 1px solid #cfd1dc; border-radius: 4px; background: linear-gradient(#1c7e9c, #1c7e9c) center 40px / 6px 2px no-repeat #dfe1ea; }
.search {
  display: flex;
  align-items: center;
  width: 218px;
  height: 32px;
  margin: 0 3px 0 4px;
  padding: 0 5px 0 11px;
  border: 1px solid #d0d2da;
  border-radius: 16px;
  background: #f5f7fb;
}
.search input { flex: 1; min-width: 0; padding: 0 0 0 10px; border: 0; background: none; font: inherit; font-size: 13px; }
.search input::placeholder { color: #5c5f66; opacity: 1; }
.tray { justify-self: end; display: flex; align-items: center; }
.lang { margin: 0 18px 0 21px; }
.net { gap: 7px; margin-right: 16px; }
.clock { margin-right: 7px; text-align: right; }

.cursor { position: absolute; left: 156px; top: 404px; }
```
